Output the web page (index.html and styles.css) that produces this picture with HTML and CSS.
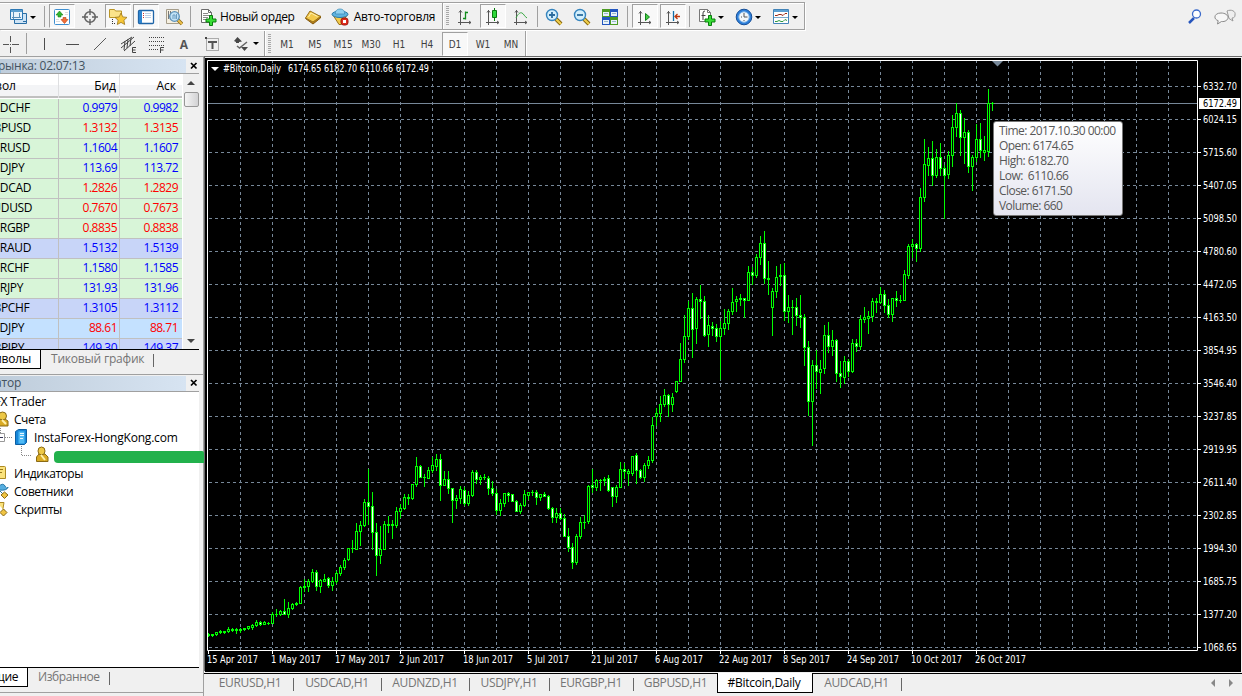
FILE: index.html
```html
<!DOCTYPE html>
<html lang="ru">
<head>
  <meta charset="UTF-8" />
  <title>#Bitcoin,Daily</title>
  <link rel="stylesheet" href="styles.css">
</head>
<body>
  <div class="toolbar main-bar">
    <div class="group files">
      <div class="btn drop">
        <svg class="icon" width="18" height="18"><path d="M5.500 5.500h12v10h-12z" fill="#cfe4f5" stroke="#2a6ea5"/><path d="M1.500 1.500h12v10h-12z" fill="#e9f4fc" stroke="#2d78b4"/><path d="M2 3h11" stroke="#5b9fd0" stroke-width="2"/><path d="M4.500 4v7M3 9.500h9M10.500 5v4" stroke="#5a8fb8" fill="none"/><path d="M14 13.500h3" stroke="#2a6ea5"/></svg>
        <i class="caret"></i>
      </div>
      <i class="sep"></i>
      <div class="btn on"><svg class="icon" width="18" height="18"><rect x="1.500" y="1.500" width="15" height="15" rx="1" fill="#fff" stroke="#3f8fd0"/><path d="M3 13.500h4M3 11.500h3M12 4.500h3M12 6.500h3" stroke="#ddd"/><path d="M3 7l3.500-4L10 7H8v2H5V7z" fill="#2fb52f" stroke="#158015" stroke-width=".6"/><path d="M8 11.500l3.500 4 3.500-4h-2v-2h-3v2z" fill="#f0703a" stroke="#b83c10" stroke-width=".6"/></svg></div>
      <div class="btn"><svg class="icon" width="18" height="18" fill="none" stroke="#636363"><circle cx="9" cy="9" r="5.300" stroke-width="1.600"/><path d="M9 1v6M9 11v6M1 9h6M11 9h6" stroke-width="1.400"/></svg></div>
      <div class="btn on"><svg class="icon" width="20" height="18"><path d="M1.500 9.500v-8h5l1 1.500h6v6.500z" fill="#fbe38a" stroke="#b99527"/><path d="M4.500 11v6M6 15.500h2" stroke="#333" stroke-dasharray="1 1"/><path d="M13 5l1.800 3.900 4.200.5-3.100 2.900.8 4.200-3.700-2.100-3.700 2.100.8-4.200L7 9.400l4.200-.5z" fill="#f7c737" stroke="#9b761c" stroke-width=".8"/></svg></div>
      <div class="btn on"><svg class="icon" width="18" height="18"><rect x="1.500" y="2.500" width="15" height="13" rx="1" fill="#fff" stroke="#1f65a8" stroke-width="1.300"/><path d="M2 3h3v12H2z" fill="#2f85cf"/><path d="M8 5.500h6M8 7.500h6M8 9.500h6" stroke="#bcd0e6"/><path d="M6.500 5v1M6.500 7v1M6.500 9v1" stroke="#c33"/></svg></div>
      <div class="btn"><svg class="icon" width="18" height="18"><path d="M1.500 1.500h12v14h-12z" fill="#f5efe0" stroke="#a59d8a"/><path d="M3.500 3v8M5.500 3v5" stroke="#777"/><path d="M13 12l4 4" stroke="#8b6a16" stroke-width="3.500"/><path d="M13 12l4 4" stroke="#edc04b" stroke-width="2"/><circle cx="9.500" cy="8.500" r="4.800" fill="#c2e2f6" stroke="#5c91b8" stroke-width="1.300"/><path d="M8 11V7h2v4M11.500 6v5" stroke="#6b9cc0" fill="none"/></svg></div>
      <i class="sep"></i>
      <div class="btn order"><svg class="icon" width="18" height="18"><path d="M2.500 1.500h7l3 3v10h-10z" fill="#fff" stroke="#6b6b6b"/><path d="M9.500 1.500v3h3" fill="none" stroke="#6b6b6b"/><path d="M4 5.500h5M4 7.500h7M4 9.500h5M4 11.500h3" stroke="#8a8a8a"/><path d="M10.500 7.500h3v3.500H17v3h-3.500v3.500h-3V14H7v-3h3.500z" fill="#39dd36" stroke="#087c0d"/></svg><span>Новый ордер</span></div>
      <div class="btn"><svg class="icon" width="18" height="18"><path d="M1.500 10.500L9 16l7.500-6V8z" fill="#b67f16" stroke="#83580c"/><path d="M1.500 10L6 3l10.500 5.500L9 14z" fill="#f3c94c" stroke="#98701a"/><path d="M4.500 9L7 5l6.500 3.500" stroke="#fff0b0" fill="none"/></svg></div>
      <div class="btn auto"><svg class="icon" width="18" height="18"><path d="M2 7l6 9.500h2L16 7z" fill="#f3cc4c" stroke="#98701a"/><ellipse cx="9" cy="6.300" rx="8" ry="3.200" fill="#5db3e0" stroke="#2d7ba9"/><path d="M4.500 6C4 2 7 1 9 1s5 1 4.500 5z" fill="#8fd0f0" stroke="#3a87b2" stroke-width=".7"/><rect x="10" y="10" width="7" height="7" rx="2.500" fill="#e12c1c" stroke="#9e170d"/><path d="M12 12h3v3h-3z" fill="#fff"/></svg><span>Авто-торговля</span></div>
    </div>
    <div class="group charts">
      <i class="grip"></i>
      <div class="btn"><svg class="icon" width="18" height="18" fill="none"><path d="M4.500 2v15M2 14.500h13M3 4.500l1.500-2 1.500 2M13 13l2 1.500-2 1.500" stroke="#565656"/><path d="M9.500 3.500v8M9.500 4.500H12M7 10.500h2.500" stroke="#128a1c" stroke-width="1.300"/></svg></div>
      <div class="btn on"><svg class="icon" width="18" height="18" fill="none"><path d="M4.500 2v15M2 14.500h13M3 4.500l1.500-2 1.500 2M13 13l2 1.500-2 1.500" stroke="#565656"/><path d="M10.500 0v13" stroke="#087c0d"/><path d="M8.500 2.500h4v7h-4z" fill="#2ed83a" stroke="#087c0d"/></svg></div>
      <div class="btn"><svg class="icon" width="18" height="18" fill="none"><path d="M4.500 2v15M2 14.500h13M3 4.500l1.500-2 1.500 2M13 13l2 1.500-2 1.500" stroke="#565656"/><path d="M4 10c2-4 4-6 6-5s2 3 5 5" stroke="#38a842"/></svg></div>
      <i class="sep thin"></i>
      <div class="btn"><svg class="icon" width="18" height="18"><path d="M11 11l5 5" stroke="#83640c" stroke-width="4"/><path d="M11 11l5 5" stroke="#f0cf4e" stroke-width="2.200"/><circle cx="7" cy="7" r="5.500" fill="#d3effc" stroke="#3584be" stroke-width="1.400"/><path d="M4 7h6M7 4v6" stroke="#2b6c9e" stroke-width="1.800"/></svg></div>
      <div class="btn"><svg class="icon" width="18" height="18"><path d="M11 11l5 5" stroke="#83640c" stroke-width="4"/><path d="M11 11l5 5" stroke="#f0cf4e" stroke-width="2.200"/><circle cx="7" cy="7" r="5.500" fill="#d3effc" stroke="#3584be" stroke-width="1.400"/><path d="M4 7h6" stroke="#2b6c9e" stroke-width="1.800"/></svg></div>
      <div class="btn"><svg class="icon" width="18" height="18"><path d="M1 1h8v8H1z" fill="#4d9c24"/><path d="M9 1h8v8H9z" fill="#2357c0"/><path d="M1 9h8v8H1z" fill="#2357c0"/><path d="M9 9h8v8H9z" fill="#4d9c24"/><path d="M2 4h6v4H2zM10 4h6v4h-6zM2 12h6v4H2zM10 12h6v4h-6z" fill="#e9f2fa"/><path d="M3 5.500h4M11 5.500h4M3 13.500h4M11 13.500h4" stroke="#96b9c8"/></svg></div>
      <i class="sep"></i>
      <div class="btn on"><svg class="icon" width="18" height="18" fill="none"><path d="M4.500 3v14M2 14.500h13M3 5.500l1.500-2 1.500 2M13 13l2 1.500-2 1.500" stroke="#565656"/><path d="M9.500 5.500v7l4-3.500z" fill="#44cd43" stroke="#12831b"/></svg></div>
      <div class="btn on"><svg class="icon" width="18" height="18" fill="none"><path d="M4.500 3v14M2 14.500h13M3 5.500l1.500-2 1.500 2M13 13l2 1.500-2 1.500" stroke="#565656"/><path d="M9.500 3v10" stroke="#126ea8" stroke-width="1.300"/><path d="M11 8.500h5M13.500 6L11 8.500l2.500 2.500" stroke="#bd3910" stroke-width="1.300"/></svg></div>
      <i class="sep"></i>
      <div class="btn drop"><svg class="icon" width="18" height="18"><path d="M1.500 1.500h8l3 3v9h-11z" fill="#fff" stroke="#777"/><path d="M9.500 1.500v3h3" fill="none" stroke="#777"/><path d="M3.500 7.500h4M5 12V5q0-2 2-2" fill="none" stroke="#444"/><path d="M10.500 7.500h3v3.500H17v3h-3.500v3.500h-3V14H7v-3h3.500z" fill="#39dd36" stroke="#087c0d"/></svg><i class="caret"></i></div>
      <div class="btn drop"><svg class="icon" width="18" height="18"><circle cx="9" cy="9" r="7.800" fill="#2d7fda" stroke="#164f98"/><circle cx="9" cy="9" r="5.200" fill="#f3f8fc" stroke="#8cbbe8"/><path d="M9 9V5M9 9h3.500M6 9h1M9 12v1" stroke="#555" fill="none"/></svg><i class="caret"></i></div>
      <div class="btn drop"><svg class="icon" width="18" height="18"><path d="M1.500 1.500h15v14h-15z" fill="#fff" stroke="#4384b8"/><path d="M2 3h14" stroke="#5c9fd2" stroke-width="2"/><path d="M2 9.500h14" stroke="#7ba9cc"/><path d="M3 7.500h2l2-1h2l2 1 2-2h2" stroke="#9c2a15" fill="none"/><path d="M3 13.500h2l2-1 2 1h2l2-2 2 1" stroke="#2e9941" fill="none"/></svg><i class="caret"></i></div>
    </div>
    <div class="corner">
      <svg width="18" height="18" fill="none"><path d="M2 15l5-5" stroke="#2756bd" stroke-width="2.500"/><circle cx="9.500" cy="6" r="4" fill="#fff" stroke="#3c6bcb" stroke-width="1.300"/></svg>
      <svg width="22" height="18"><path d="M13 3c4-2 9 0 8 4 0 2-1 3-3 3l1 3-4-2.500z" fill="#eee" stroke="#999"/><path d="M7 5c4 0 7 2 7 4.500S11 14 7.500 13.500L3.500 16l.7-3.300C-1 11 0 5 7 5z" fill="#f7f7f7" stroke="#8a8a8a"/></svg>
    </div>
  </div>

  <div class="toolbar line-bar">
    <div class="group lines">
      <div class="btn first"><svg width="18" height="18" stroke="#555"><path d="M9.500 1v6M9.500 12v6M2 9.500h6M11 9.500h7M9 9.500h1"/></svg></div>
      <i class="sep"></i>
      <div class="btn"><svg width="18" height="18" stroke="#4d4d4d"><path d="M9.500 3v12"/></svg></div>
      <div class="btn"><svg width="18" height="18" stroke="#4d4d4d"><path d="M3 9.500h13"/></svg></div>
      <div class="btn"><svg width="18" height="18" stroke="#5b5b5b"><path d="M3 15L15 3"/></svg></div>
      <div class="btn"><svg width="18" height="18" stroke="#444" fill="none"><path d="M2 13L15 2M2 9l11-7M5 16L16 6M6 6l-1 9M9 4L8 13M12 3l-1 8"/><path d="M17 12.500h-3.500v5H17M13.500 15h3"/></svg></div>
      <div class="btn"><svg width="18" height="18" stroke="#444" fill="none"><path d="M2 2.500h15M2 6.500h15M2 10.500h15M2 14.500h10" stroke-dasharray="1 1"/><path d="M17 12.500h-3.500V18M13.500 15h3"/></svg></div>
      <div class="btn letter">A</div>
      <div class="btn"><svg width="18" height="18"><path d="M3.500 3.500h12v12h-12z" fill="none" stroke="#666" stroke-dasharray="1 1"/><path d="M5 6h9v2h-3.500v6h-2V8H5z" fill="#555"/><path d="M2 2h2v2H2z" fill="#444"/></svg></div>
      <div class="btn drop"><svg width="18" height="18"><path d="M5.500 2L10 6.500 7 7v1H4V7L2 6zM9 12h7l-3.500 4z" fill="#474747"/><path d="M5 11l2.500 2L15 7" stroke="#666" stroke-width="1.500" fill="none"/></svg><i class="caret"></i></div>
    </div>
    <div class="group periods">
      <i class="grip"></i>
      <div class="btn">M1</div><div class="btn">M5</div><div class="btn">M15</div><div class="btn">M30</div><div class="btn">H1</div><div class="btn">H4</div><div class="btn on">D1</div><div class="btn">W1</div><div class="btn">MN</div>
    </div>
  </div>

  <div class="workspace">
    <div class="side">
      <div class="panel watch">
        <div class="caption"><span class="name"><b>Обзор рынка: 02:07:13</b></span><svg class="close" width="8" height="8"><path d="M1 1l5.500 5.500M6.500 1L1 6.500" stroke="#000" stroke-width="1.700"/></svg></div>
        <div class="quotes">
          <div class="table">
            <div class="row head"><span>Символ</span><span>Бид</span><span>Аск</span></div>
            <div id="rows"></div>
          </div>
          <div class="scroll"><i class="arrow-up"></i><i class="thumb"></i><i class="arrow-down"></i></div>
        </div>
        <div class="tabs"><span class="tab active"><b>Символы</b></span><span class="tab">Тиковый график</span></div>
      </div>
      <div class="panel nav">
        <div class="caption"><span class="name"><b>Навигатор</b></span><svg class="close" width="8" height="8"><path d="M1 1l5.500 5.500M6.500 1L1 6.500" stroke="#000" stroke-width="1.700"/></svg></div>
        <div class="tree">
          <div class="node root"><span>IFX Trader</span></div>
          <div class="node"><svg width="14" height="18"><path d="M-3 16V9h8l3 2v5z" fill="#d9aa23" stroke="#8a6a15"/><circle cx="2.500" cy="6" r="4" fill="#edc846" stroke="#8a6a15"/><path d="M2 10l4 4" stroke="#fff0a8" stroke-width="2"/></svg><span>Счета</span></div>
          <div class="node server">
            <svg width="34" height="18"><path d="M.5 0v5M5 9.500h7" stroke="#888" stroke-dasharray="1 1"/><path d="M-3.500 5.500h8v8h-8z" fill="#fff" stroke="#999"/><path d="M-1 9.500h4" stroke="#335"/><path d="M15.500 3.500l3-2h8v13l-2 2h-9z" fill="#1687d9" stroke="#0b5fa3"/><path d="M18.500 3.500h6v12h-6z" fill="#50baf4"/><path d="M20 5.500h4M20 7.500h4M20 10.500h3" stroke="#e8f6ff"/></svg>
            <span>InstaForex-HongKong.com</span>
          </div>
          <div class="node login">
            <svg width="54" height="18"><path d="M21.500 0v9.500H32" stroke="#888" stroke-dasharray="1 1" fill="none"/><path d="M36.500 15.500V11l2.500-3h6l3 3v4.500z" fill="#d9aa23" stroke="#8a6a15"/><ellipse cx="41.500" cy="5" rx="3.500" ry="4" fill="#edc846" stroke="#8a6a15"/><path d="M41 9l4 5" stroke="#fff0a8" stroke-width="2"/></svg>
            <i class="mask"></i>
          </div>
          <div class="node"><svg width="14" height="18"><path d="M-4 2.500H4.500q1 0 1 1v11H-4z" fill="#fae27c" stroke="#ad8a22"/><path d="M0 5.500h3M0 8.500h2" stroke="#997718"/></svg><span>Индикаторы</span></div>
          <div class="node"><svg width="14" height="18"><path d="M-2 5Q3 0 5 4t3 1q-1 4-9 3z" fill="#56aee0" stroke="#2578a8"/><path d="M0 9l4 4" stroke="#2578a8"/><path d="M4.500 10L8 13l-3.500 3.500L1 13z" fill="#f0c443" stroke="#8a6a15"/></svg><span>Советники</span></div>
          <div class="node"><svg width="14" height="18"><path d="M-3 2.500h7l-1 6 2 3" fill="#fae27c" stroke="#ad8a22"/><path d="M3.500 9L7 12.500 3.500 16 0 12.500z" fill="#f0c443" stroke="#8a6a15"/></svg><span>Скрипты</span></div>
        </div>
        <div class="tabs"><span class="tab active"><b>Общие</b></span><span class="tab">Избранное</span></div>
      </div>
    </div>

    <div class="main">
      <div class="chart">
        <svg id="chart" width="1036" height="614" viewBox="205 58 1036 614"></svg>
        <div class="tip">Time: 2017.10.30 00:00<br>Open: 6174.65<br>High: 6182.70<br>Low:&nbsp; 6110.66<br>Close: 6171.50<br>Volume: 660</div>
      </div>
      <div class="chart-tabs">
        <span class="t1">EURUSD,H1</span><span class="t2">USDCAD,H1</span><span class="t3">AUDNZD,H1</span><span class="t4">USDJPY,H1</span><span class="t5">EURGBP,H1</span><span class="t6">GBPUSD,H1</span><span class="t7 active">#Bitcoin,Daily</span><span class="t8">AUDCAD,H1</span>
        <div class="arrows"><i class="left"></i><i class="right"></i></div>
      </div>
    </div>
  </div>
  <script src="chart.js"></script>
</body>
</html>
```

FILE: styles.css
```css
html, body {
  margin: 0;
  padding: 0;
}

body {
  width: 1242px;
  height: 696px;
  overflow: hidden;
  background: #f0f0f0;
  font-family: "Open Sans", "Noto Sans", sans-serif;
  font-size: 12px;
  color: #000;
}

b {
  font-weight: normal;
}

.toolbar {
  display: flex;
  box-sizing: border-box;
}

.main-bar {
  height: 31px;
  padding-top: 2px;
}

.line-bar {
  height: 25px;
}

.group {
  display: flex;
  align-items: center;
  box-sizing: border-box;
  border-right: 1px solid #a0a0a0;
  box-shadow: 1px 0 #fff;
}

.main-bar .group {
  height: 28px;
  border-top: 1px solid #a0a0a0;
  border-bottom: 1px solid #a0a0a0;
  box-shadow: 1px 1px #fff, inset 0 1px #fff;
}

.files { width: 443px; padding-left: 5px; }
.charts { width: 362px; padding-left: 3px; }
.lines { width: 265px; }
.periods { width: 261px; padding-left: 3px; }

.btn {
  display: flex;
  align-items: center;
  justify-content: center;
  box-sizing: border-box;
  width: 28px;
  height: 24px;
  flex: none;
}

.btn.on {
  width: 26px;
  margin: 0 1px;
  border: 1px solid #fff;
  border-top-color: #a0a0a0;
  border-left-color: #a0a0a0;
  background: #f8f8f8;
}

.main-bar .btn {
  padding-top: 2px;
}

.btn.drop {
  width: 37px;
  padding-left: 5px;
  gap: 3px;
  justify-content: flex-start;
}

.files .btn.drop {
  padding-left: 4px;
}

.caret {
  width: 0;
  border: 3px solid transparent;
  border-top-color: #000;
  border-bottom: 0;
}

.charts .caret {
  margin-left: -1px;
}

.sep {
  width: 1px;
  height: 21px;
  margin: 0 3px 0 2px;
  background: #a0a0a0;
  flex: none;
}

.sep.thin {
  margin: 0 2px;
}

.thin ~ .sep {
  margin-left: 3px;
}

.thin ~ .sep ~ .sep {
  margin-left: 2px;
}

.order {
  width: 105px;
  gap: 3px;
  justify-content: flex-start;
  padding-left: 5px;
  letter-spacing: -0.35px;
}

.auto {
  width: 112px;
  gap: 5px;
  letter-spacing: -0.2px;
}

.order span,
.auto span {
  margin-top: -2px;
  white-space: nowrap;
}

.grip {
  width: 3px;
  height: 20px;
  margin-right: 2px;
  background: repeating-linear-gradient(#a8a8a8 0 1px, #f0f0f0 1px 2px);
}

.corner {
  display: flex;
  gap: 9px;
  margin-left: auto;
  padding: 6px 6px 0 0;
}

.lines .first {
  width: 24px;
  padding-right: 4px;
}

.lines .drop {
  padding-left: 6px;
}

.letter {
  padding-top: 1px;
  font-size: 12px;
  font-weight: bold;
  color: #555;
}

.periods .btn {
  padding-top: 2px;
  font-family: "DejaVu Sans Condensed", "DejaVu Sans", sans-serif;
  font-size: 10px;
  color: #404040;
}

.workspace {
  display: flex;
  height: 640px;
}

.side {
  display: flex;
  flex-direction: column;
  width: 204px;
  box-sizing: border-box;
  border-right: 1px solid #a0a0a0;
  flex: none;
}

.panel {
  display: flex;
  flex-direction: column;
  box-sizing: border-box;
  padding-right: 4px;
  border-bottom: 1px solid #a0a0a0;
}

.watch { height: 319px; padding-top: 2px; border-top: 1px solid #a0a0a0; }
.nav { height: 318px; padding-top: 1px; }

.caption {
  display: flex;
  height: 14px;
  border-bottom: 1px solid #a0a0a0;
  color: #43525f;
}

.nav .caption {
  height: 15px;
}

.name {
  display: flex;
  justify-content: flex-end;
  align-items: center;
  box-sizing: border-box;
  width: 186px;
  height: 14px;
  line-height: 13px;
  padding: 0 101px 1px 0;
  background: linear-gradient(90deg, #bfcddb, #d7e4f2);
  white-space: nowrap;
  letter-spacing: -0.25px;
}

.nav .name {
  height: 15px;
  line-height: 14px;
  padding-right: 165px;
}

.close {
  margin: 3px 0 0 4px;
}

.quotes {
  display: flex;
  height: 275px;
  overflow: hidden;
  background: #fff;
}

.table {
  width: 182px;
}

.row {
  display: grid;
  grid-template-columns: 59px 61px 62px;
  height: 19px;
  line-height: 18px;
  border-bottom: 1px solid #c0c0c0;
  background: #d8f5d8;
}

.row span {
  box-sizing: border-box;
  padding-right: 2px;
  border-right: 1px solid #c0c0c0;
  text-align: right;
  letter-spacing: -0.5px;
}

.row span:first-child {
  text-align: left;
  text-indent: -15px;
  letter-spacing: -0.3px;
}

.row span:last-child {
  border: 0;
  padding-right: 4px;
}

.row.blue { background: #c8d5f8; }
.row.sky { background: #c4e1ff; }
.row.up { color: #0000ff; }
.row.down { color: #ff0000; }
.row.up span:first-child,
.row.down span:first-child { color: #000; }

.row.head {
  height: 22px;
  line-height: 24px;
  margin-bottom: 1px;
  border-bottom-width: 2px;
  background: linear-gradient(#fff, #fff 50%, #f3f4f6 51%);
}

.row.head span {
  border-color: #dedfe1;
  letter-spacing: 0;
}

.row.head span:first-child {
  text-indent: -29px;
}

.row.head span:nth-child(2) {
  padding-right: 3px;
}

.row.head span:last-child {
  padding-right: 6px;
}

.scroll {
  display: flex;
  flex-direction: column;
  align-items: center;
  width: 17px;
  margin-left: 1px;
  background: #f0f0f0;
}

.arrow-up,
.arrow-down {
  width: 0;
  border: 4px solid transparent;
}

.arrow-up {
  margin-top: 7px;
  border-top: 0;
  border-bottom-color: #444;
}

.arrow-down {
  margin: auto 0 6px;
  border-bottom: 0;
  border-top-color: #444;
}

.thumb {
  width: 13px;
  height: 13px;
  margin-top: 7px;
  border: 1px solid #979797;
  border-radius: 2px;
  background: linear-gradient(90deg, #f5f5f5, #d2d2d4);
}

.tabs {
  display: flex;
  border-top: 1px solid #000;
  color: #757575;
}

.tab {
  box-sizing: border-box;
  height: 19px;
  line-height: 18px;
  padding-left: 10px;
  white-space: nowrap;
  letter-spacing: -0.2px;
}

.nav .tab {
  letter-spacing: -0.4px;
}

.tab.active {
  display: flex;
  justify-content: flex-end;
  width: 41px;
  padding: 0 9px 0 0;
  border: solid #000;
  border-width: 0 1px 1px 0;
  background: #fff;
  color: #000;
}

.tab:last-child {
  position: relative;
  padding-right: 10px;
}

.tab:last-child::after {
  content: "";
  position: absolute;
  right: 0;
  top: 4px;
  height: 13px;
  border-right: 1px solid #666;
}

.nav .tab.active {
  width: 28px;
}

.tree {
  height: 275px;
  box-sizing: border-box;
  background: #fff;
  letter-spacing: -0.2px;
}

.node {
  display: flex;
  align-items: center;
  height: 18px;
  white-space: nowrap;
}

.root ~ .node:not(.server) {
  letter-spacing: -0.45px;
}

.node svg {
  flex: none;
}

.root {
  justify-content: flex-end;
  width: 46px;
}

.mask {
  width: 150px;
  height: 12px;
  margin-top: 4px;
  border-radius: 4px 2px 0 4px;
  background: #22b14c;
  flex: none;
}

.login {
  position: relative;
  z-index: 1;
}

.main {
  width: 1038px;
}

.chart {
  position: relative;
  box-sizing: border-box;
  height: 615px;
  padding-top: 1px;
  border-left: 1px solid #696969;
  border-top: 1px solid #696969;
}

.chart svg {
  display: block;
}

.tip {
  position: absolute;
  left: 788px;
  top: 64px;
  box-sizing: border-box;
  width: 130px;
  height: 95px;
  padding: 1px 0 0 5px;
  border: 1px solid #767676;
  border-radius: 3px;
  background: linear-gradient(#fff, #e4e5f0);
  color: #575757;
  line-height: 15px;
  letter-spacing: -0.55px;
  white-space: nowrap;
}

.axis {
  fill: #fff;
  font-family: "DejaVu Sans Condensed", "DejaVu Sans", sans-serif;
  font-size: 10px;
}

.chart-tabs {
  display: flex;
  box-sizing: border-box;
  height: 20px;
  margin-top: 2px;
  border-top: 1px solid #000;
  color: #757575;
}

.chart-tabs span {
  box-sizing: border-box;
  height: 19px;
  line-height: 18px;
  padding-right: 2px;
  text-align: center;
  white-space: nowrap;
  letter-spacing: -0.35px;
  background: linear-gradient(#666, #666) right 4px / 1px 13px no-repeat;
}

.chart-tabs .t1 { width: 90px; padding-left: 4px; }
.t2 { width: 88px; }
.t3 { width: 88px; }
.t4 { width: 80px; }
.t5 { width: 84px; }
.t6 { width: 83px; }
.t7 { width: 96px; }
.t8 { width: 89px; }

.chart-tabs .t6 {
  padding-right: 0;
  background: none;
}

.chart-tabs .active {
  margin-top: -1px;
  height: 20px;
  line-height: 19px;
  border: solid #000;
  border-width: 0 1px 1px;
  background: #fff;
  color: #000;
  letter-spacing: -0.25px;
}

.arrows {
  display: flex;
  gap: 14px;
  margin: 5px 9px 0 auto;
}

.arrows i {
  border: 4px solid transparent;
  height: 0;
}

.arrows .left { border-left: 0; border-right-color: #888; }
.arrows .right { border-right: 0; border-left-color: #888; }
```

FILE: chart.js
```js
const quotes = [
  ['USDCHF', '0.9979', '0.9982', 'up'],
  ['GBPUSD', '1.3132', '1.3135', 'down'],
  ['EURUSD', '1.1604', '1.1607', 'up'],
  ['USDJPY', '113.69', '113.72', 'up'],
  ['USDCAD', '1.2826', '1.2829', 'down'],
  ['AUDUSD', '0.7670', '0.7673', 'down'],
  ['EURGBP', '0.8835', '0.8838', 'down'],
  ['EURAUD', '1.5132', '1.5139', 'up blue'],
  ['EURCHF', '1.1580', '1.1585', 'up'],
  ['EURJPY', '131.93', '131.96', 'up'],
  ['GBPCHF', '1.3105', '1.3112', 'up blue'],
  ['CADJPY', '88.61', '88.71', 'down sky'],
  ['GBPJPY', '149.30', '149.37', 'up blue']
];

document.getElementById('rows').innerHTML = quotes.map(q =>
  `<div class="row ${q[3]}"><span>${q[0]}</span><span>${q[1]}</span><span>${q[2]}</span></div>`
).join('');

// high, body top, body bottom, low; a trailing 1 marks a falling day
const candles = `633 634 635 636,634 634 635 636,632 632 634 635,630 631 632 633,631 631 632 633,627 629 631 632,628 629 630 631,628 629 630 633,628 629 630 632,628 628 629 630
626 626 628 629,624 625 627 629,620 622 625 626,621 622 624 625 1,621 622 624 624,622 623 623 624,612 614 623 623,609 614 614 616,610 611 614 615,599 611 614 614 1
602 608 614 617,603 604 608 609,602 603 604 605,586 587 603 603,579 586 587 591,579 581 586 591,569 572 581 582,570 572 586 590 1,579 580 586 592,574 579 581 581
577 578 585 587 1,577 581 585 590,571 573 581 583,565 567 573 575,558 560 567 569,548 548 559 560,540 548 548 552,523 531 549 549,521 525 531 545,499 502 525 526
469 502 506 524 1,492 506 532 549 1,523 532 555 575 1,526 549 555 563,521 524 549 549,516 524 525 532,520 524 525 538,507 511 525 527,504 508 511 517,494 497 508 509
494 497 498 504,484 484 498 499,457 466 484 486,465 466 477 477 1,474 477 477 486,467 470 478 478,457 465 470 472,454 459 466 470,454 459 485 500 1,471 479 485 485
471 479 488 493 1,488 488 500 522 1,495 498 500 508,486 489 498 503,487 490 503 505 1,491 495 503 505,470 472 495 496,470 472 479 483 1,475 477 479 484,474 477 477 479
476 478 488 494 1,481 488 493 495 1,489 493 510 514 1,499 503 510 515,493 493 503 506,492 493 495 501 1,494 494 501 501 1,500 501 511 511 1,503 505 511 513,490 494 505 506
492 492 495 499,490 492 492 495,490 492 497 504 1,494 494 497 500,492 494 496 496 1,495 496 508 509 1,507 508 517 522 1,508 513 517 522,508 513 518 519 1,514 518 536 536 1
528 536 547 551 1,543 547 562 568 1,534 536 562 564,517 522 536 538,515 522 522 528,485 486 521 523,469 485 487 492 1,479 480 487 490,479 480 480 490,477 479 480 485
475 478 490 491 1,487 487 496 506 1,485 487 496 502,462 469 487 487,463 469 471 478 1,469 471 473 485,456 456 473 475,453 455 470 483 1,469 470 477 478 1,463 465 477 481
456 460 465 468,417 425 460 462,408 413 416 425,396 404 413 421,389 395 404 406,394 395 404 416 1,393 397 404 411,381 381 391 392,343 359 381 381,315 336 359 362
301 308 336 339,293 308 329 357 1,297 299 328 343,285 299 301 318 1,296 301 335 336 1,315 325 334 346,322 326 328 335 1,324 328 336 341 1,321 328 336 379,309 323 328 334
309 311 323 329,288 302 311 314,296 299 301 311,294 298 299 305,298 298 300 317 1,266 272 300 300,267 272 275 284 1,254 257 275 277,236 243 257 264,231 243 278 283 1
261 278 279 294,288 291 307 335,266 277 291 297,264 275 276 285,263 275 311 320 1,295 307 311 322,300 307 307 334,298 307 315 325 1,295 315 317 327 1,314 317 347 365 1
341 347 401 415 1,360 365 401 445,350 365 371 388 1,360 369 372 393,325 335 368 373,322 335 346 352 1,330 340 346 355,339 340 373 381 1,361 373 376 387 1,356 361 377 383
359 361 371 376 1,339 343 371 372,339 343 346 351 1,315 319 346 349,307 317 319 322,311 316 318 333,298 301 316 321,298 301 302 312,287 294 302 303,290 294 305 312 1
299 305 314 317 1,298 298 314 321,291 298 300 306 1,295 300 300 302,270 274 300 300,244 246 275 278,239 244 246 257,243 244 248 261 1,188 197 248 251,139 164 197 201
147 158 165 175,141 158 175 185 1,149 157 175 177,143 157 168 175 1,165 168 175 218 1,151 155 174 178,115 127 155 166,103 113 127 136,110 113 137 155 1,118 132 137 163
130 132 166 172 1,155 157 166 190,124 139 157 161,123 139 150 157 1,136 150 152 160,89 103 151 156,102 103 103 110`
  .split(/[,\n]/).map(c => c.split(' ').map(Number));

const prices = ['6332.70', '6024.15', '5715.60', '5407.05', '5098.50', '4780.60', '4472.05', '4163.50', '3854.95',
  '3546.40', '3237.85', '2919.95', '2611.40', '2302.85', '1994.30', '1685.75', '1377.20', '1068.65'];

const dates = [['15 Apr 2017', 51], ['1 May 2017', 50], ['17 May 2017', 55], ['2 Jun 2017', 45], ['18 Jun 2017', 50],
  ['5 Jul 2017', 42], ['21 Jul 2017', 47], ['6 Aug 2017', 48], ['22 Aug 2017', 53], ['8 Sep 2017', 47],
  ['24 Sep 2017', 52], ['10 Oct 2017', 51], ['26 Oct 2017', 51]];

const rect = (x, y, w, h, fill) => `<rect x="${x}" y="${y}" width="${w}" height="${h}" fill="${fill}"/>`;
const label = (x, y, w, text, extra = '') =>
  `<text class="axis" x="${x}" y="${y}" textLength="${w}" lengthAdjust="spacingAndGlyphs" ${extra}>${text}</text>`;

let out = rect(205, 58, 1036, 614, '#000');

// grid
for (let x = 240; x < 1197; x += 32) {
  out += `<path d="M${x + 0.5} 60V650" stroke="#778899" stroke-dasharray="3 3"/>`;
}
prices.forEach((p, i) => {
  const y = 86 + i * 33;
  out += `<path d="M209 ${y + 0.5}H1197" stroke="#778899" stroke-dasharray="3 3"/>`;
  out += rect(1198, y, 3, 1, '#fff') + label(1203, y + 4, 34, p);
});
out += rect(208, 103, 989, 1, '#778899');

candles.forEach(([high, top, bottom, low, down], i) => {
  const x = 208 + i * 4;
  out += rect(x, high, 1, low - high + 1, '#0f0') + rect(x - 1, top, 3, bottom - top + 1, '#0f0');
  if (bottom - top > 1) {
    out += rect(x, top + 1, 1, bottom - top - 1, down ? '#fff' : '#000');
  }
});

// frame, time axis, header
out += '<path d="M207.5 60.5H1197.5V650.5H207.5z" fill="none" stroke="#fff"/>';
dates.forEach(([text, w], i) => {
  const x = 208 + i * 64;
  out += rect(x, 651, 1, 3, '#fff') + label(x - 1, 663, w, text);
});
out += '<path d="M992 61h11l-5.500 5.500z" fill="#778899"/>';
out += '<path d="M211 67h8l-4 4z" fill="#fff"/>';
out += label(223, 72, 58, '#Bitcoin,Daily') + label(288, 72, 141, '6174.65 6182.70 6110.66 6172.49');
out += rect(1199, 98, 41, 11, '#fff') + label(1203, 107, 34, '6172.49', 'style="fill:#000"');

document.getElementById('chart').innerHTML = out;
```
